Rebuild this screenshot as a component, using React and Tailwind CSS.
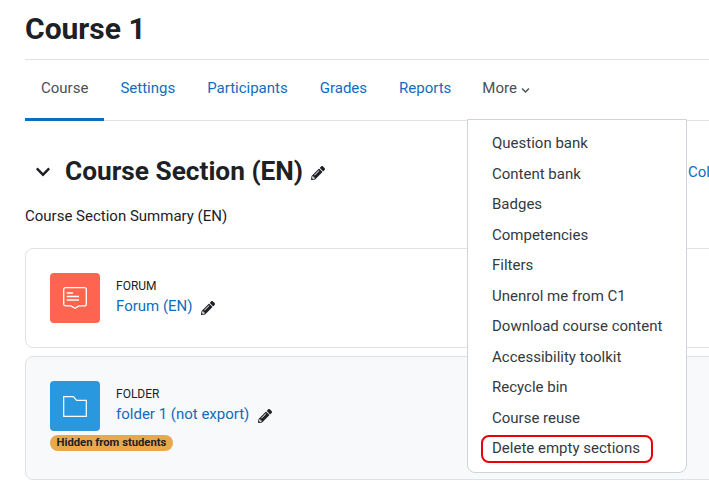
import React from 'react';
import { FaChevronDown, FaPencilAlt } from 'react-icons/fa';

const tabs = ['Settings', 'Participants', 'Grades', 'Reports'];

const menuItems = [
  'Question bank',
  'Content bank',
  'Badges',
  'Competencies',
  'Filters',
  'Unenrol me from C1',
  'Download course content',
  'Accessibility toolkit',
  'Recycle bin',
  'Course reuse',
];

const ForumIcon = () => (
  <svg width="24" height="22" viewBox="0 0 24 22" fill="none" stroke="white" strokeWidth="1.3">
    <path d="M2.6 0.7H21.4A1.9 1.9 0 0 1 23.3 2.6V17A1.9 1.9 0 0 1 21.4 18.9H16L12 21.2L8 18.9H2.6A1.9 1.9 0 0 1 0.7 17V2.6A1.9 1.9 0 0 1 2.6 0.7Z" />
    <path d="M3.7 6H10M3.7 9.5H16M3.7 13H16" strokeWidth="1.5" />
  </svg>
);

const FolderIcon = () => (
  <svg width="24" height="21" viewBox="0 0 24 21" fill="none" stroke="white" strokeWidth="1.2">
    <path d="M0.7 0.7H10.4L13.6 4.4H23.3V20.3H0.7Z" />
  </svg>
);

const ActivityCard = ({ icon, iconBg, type, name, hidden }) => (
  <div className={`border border-[#dee2e6] rounded-lg p-6 ${hidden ? 'bg-[#f8f9fa]' : 'bg-white'}`}>
    <div className="flex">
      <div className={`w-[50px] h-[50px] rounded flex items-center justify-center ${iconBg}`}>{icon}</div>
      <div className="ml-4">
        <div className="text-xs leading-[18px] text-[#1d2125] mt-1">{type}</div>
        <div className="flex items-center text-[15px] leading-[22px] text-[#0f6cbf]">
          {name}
          <FaPencilAlt className="text-[14px] text-[#1d2125] ml-[8.5px] mt-[3px]" />
        </div>
      </div>
    </div>
    {hidden && (
      <div className="mt-1 mb-1 w-fit rounded-full bg-[#e9a74e] px-[6.5px] text-[11.25px] leading-4 font-bold text-[#1d2125]">
        Hidden from students
      </div>
    )}
  </div>
);

export default function App() {
  return (
    <div className="relative w-[709px] h-[487px] overflow-hidden bg-white text-[15px] text-[#1d2125] font-['Roboto',sans-serif]">
      <div className="w-[740px] ml-[25px]">
        <div className="h-[60px] border-b border-[#dee2e6]">
          <h1 className="pt-[11px] text-[30px] leading-[36px] font-bold">Course 1</h1>
        </div>

        <div className="flex h-[61px] border-b border-[#dee2e6] leading-[22px]">
          <div className="px-4 pt-[17px] text-[#495057] border-b-[3px] border-[#0f6cbf] h-[61px] -mb-px">Course</div>
          {tabs.map((tab) => (
            <div key={tab} className="px-4 pt-[17px] text-[#0f6cbf]">{tab}</div>
          ))}
          <div className="pl-[15px] pt-[17px] text-[#495057] flex items-start">
            More
            <FaChevronDown className="text-[9px] ml-[4px] mt-[9px]" />
          </div>
        </div>

        <div className="flex items-center mt-[32px] h-[36px]">
          <FaChevronDown className="text-[16px] ml-[10px] mt-[2px]" />
          <h2 className="ml-[14px] text-[26.25px] leading-[36px] font-bold">Course Section (EN)</h2>
          <FaPencilAlt className="text-[14px] ml-[8px] mt-[3px]" />
          <div className="ml-auto mt-[2px] text-[#0f6cbf]">Collapse all</div>
        </div>

        <p className="mt-[16px] leading-[22px]">Course Section Summary (EN)</p>

        <div className="mt-[21px] flex flex-col gap-2">
          <ActivityCard icon={<ForumIcon />} iconBg="bg-[#ff6450]" type="FORUM" name="Forum (EN)" />
          <ActivityCard icon={<FolderIcon />} iconBg="bg-[#2a98df]" type="FOLDER" name="folder 1 (not export)" hidden />
        </div>
      </div>

      {/* dropdown from More */}
      <div className="absolute left-[467px] top-[119px] w-[220px] py-2 bg-white border border-[#ced4da] rounded-b-lg text-[#343a40] whitespace-nowrap">
        {menuItems.map((item) => (
          <div key={item} className="px-6 py-1 leading-[22.5px]">{item}</div>
        ))}
        <div className="relative px-6 py-1 leading-[22.5px]">
          Delete empty sections
          <div className="absolute left-[13px] top-[2px] w-[172px] h-[28px] border-2 border-[#e8000b] rounded-lg" />
        </div>
      </div>
    </div>
  );
}
